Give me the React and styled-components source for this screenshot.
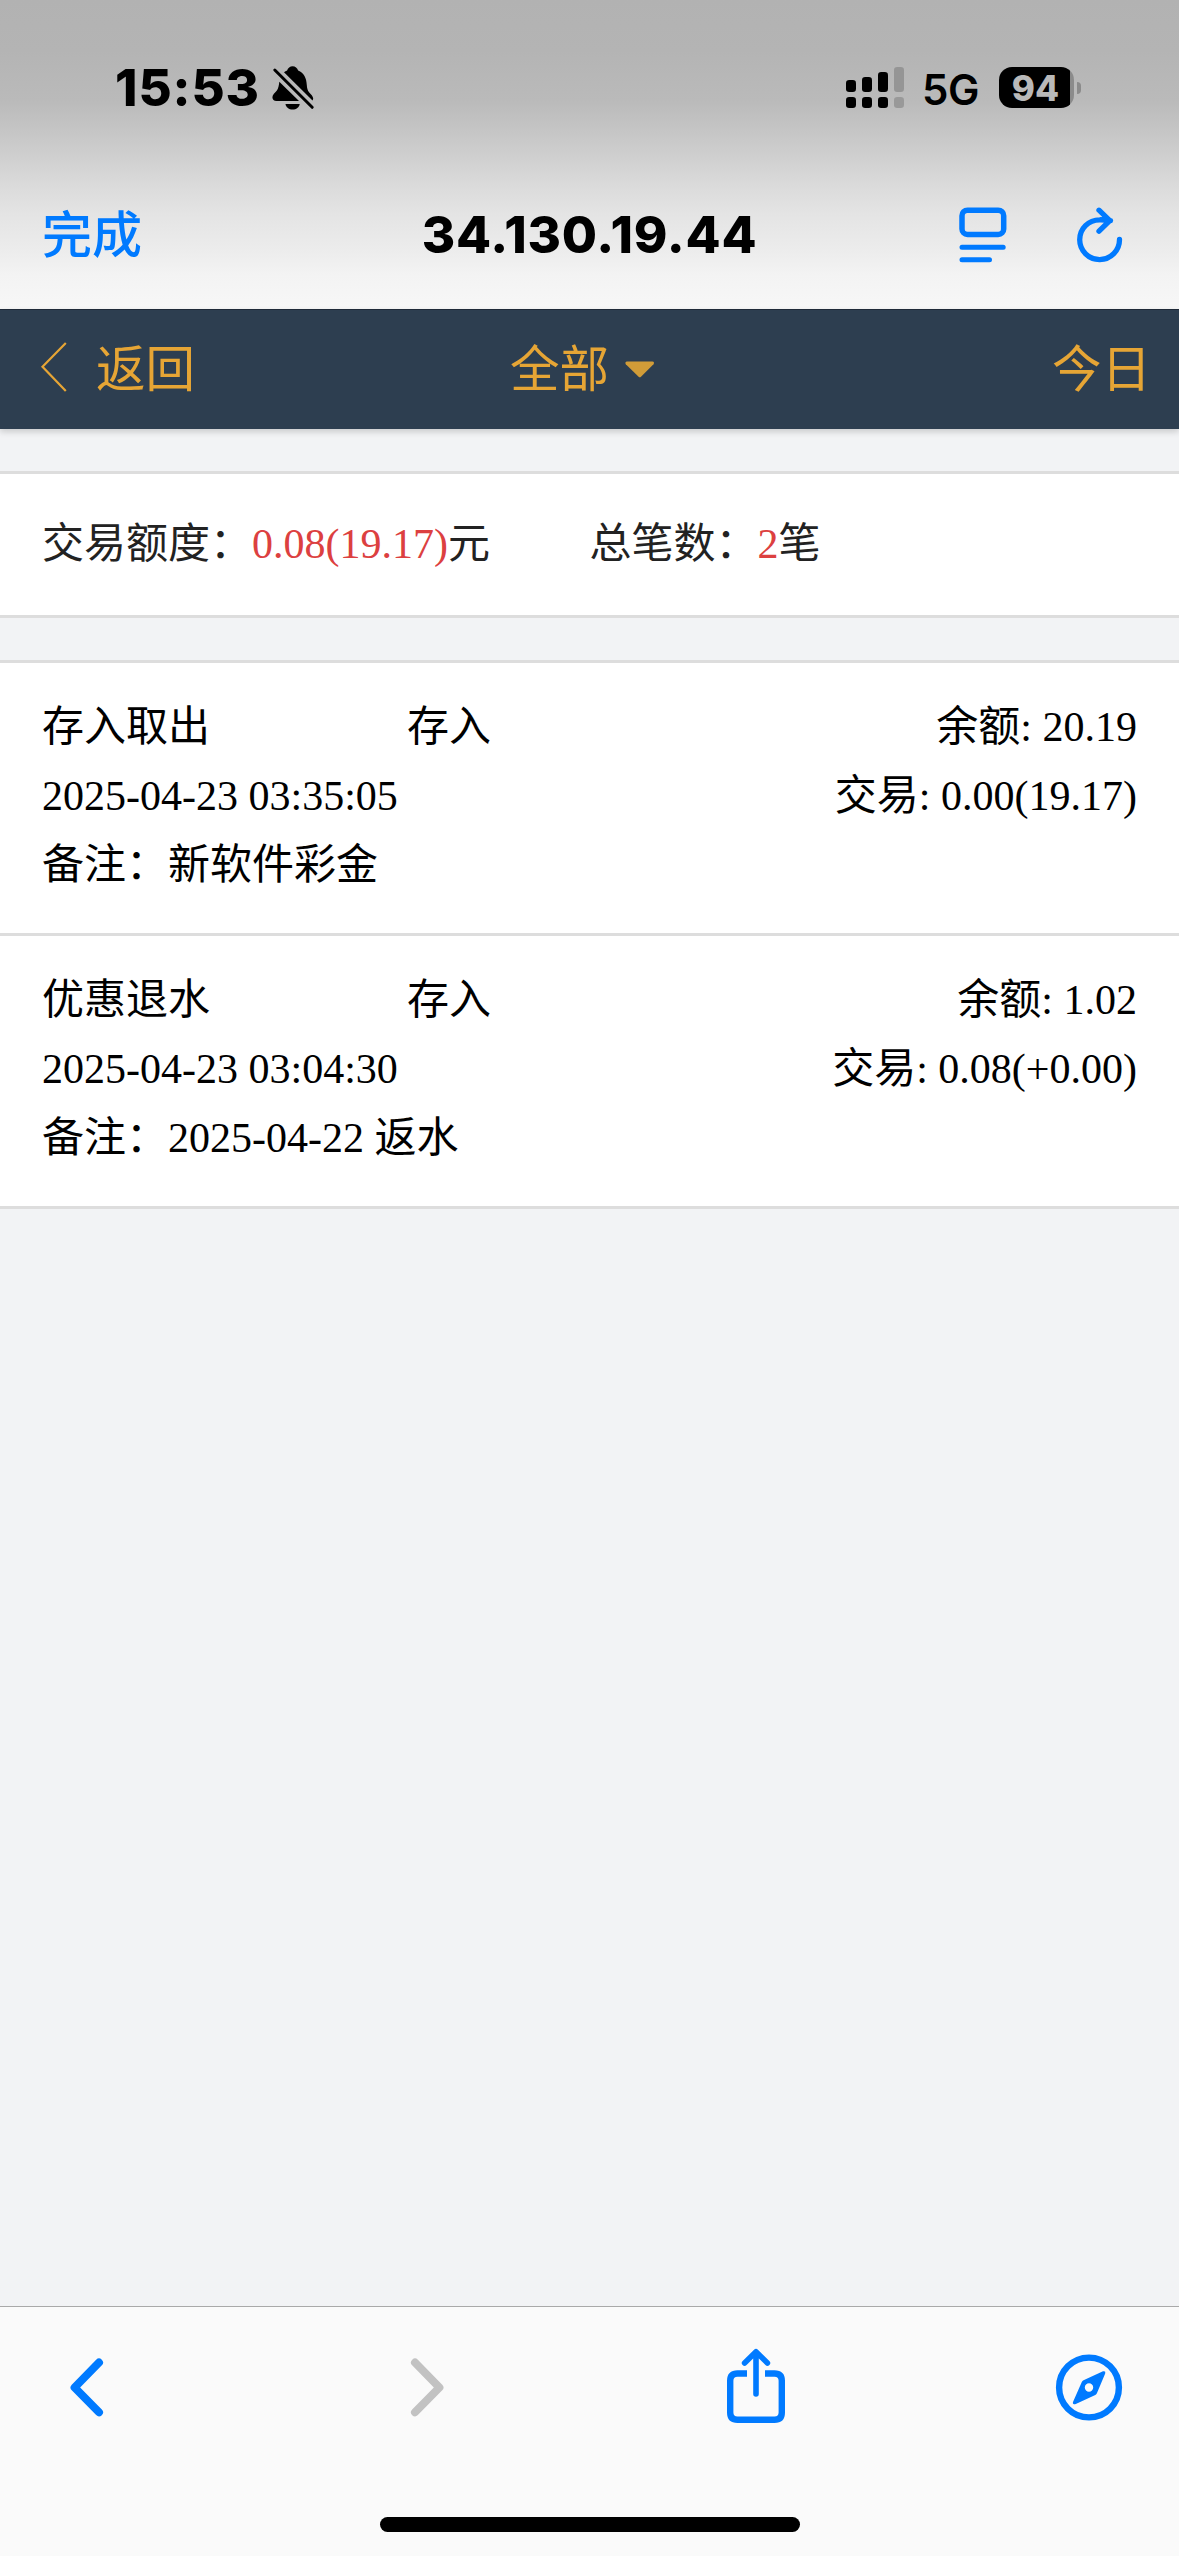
import React from "react";
import styled, { createGlobalStyle } from "styled-components";

const records = [
  {
    id: 1,
    type: "存入取出",
    action: "存入",
    balance: "20.19",
    time: "2025-04-23 03:35:05",
    amount: "0.00(19.17)",
    remark: "新软件彩金",
  },
  {
    id: 2,
    type: "优惠退水",
    action: "存入",
    balance: "1.02",
    time: "2025-04-23 03:04:30",
    amount: "0.08(+0.00)",
    remark: "2025-04-22 返水",
  },
];

function StatusBar() {
  return (
    <Status>
      <Clock>
        <span>15:53</span>
        <svg width="44" height="44" viewBox="0 0 44 44">
          <path d="M12 6.2c1-.8 2-1.300 3.100-1.700C15.900 1.900 18 .3 20.600.3s4.700 1.600 5.500 4.200c5.900 2.200 8.300 7.500 8.700 14.500.2 3.200.7 5.200 2.200 7.200 2.300 2.400 4.200 4.400 4.200 6.400 0 .8-.3 1.300-.7 1.800z" />
          <path d="M7.300 15.800 27 35H4.500C2 35 .4 33.600.4 31.300c0-2.600 2.600-4.300 4.300-6.500 1.700-2.200 2.200-5.200 2.600-9z" />
          <path d="M13.500 38h14.200c-.4 3.300-3.500 5.600-7.100 5.600s-6.700-2.300-7.100-5.600z" />
          <path d="M2.800 4 40.200 41.300" fill="none" stroke="#000" strokeWidth="3" strokeLinecap="round" />
        </svg>
      </Clock>
      <Indicators>
        <svg width="58" height="41" viewBox="0 0 58 41">
          <rect x="0" y="13" width="10" height="12" rx="3.200" />
          <rect x="16" y="10" width="10" height="15" rx="3.200" />
          <rect x="32" y="5" width="10" height="20" rx="3.200" />
          <rect x="48" y="0" width="10" height="25" rx="3.200" fill="#959595" />
          <rect x="0" y="30" width="10" height="11" rx="3.200" />
          <rect x="16" y="30" width="10" height="11" rx="3.200" />
          <rect x="32" y="30" width="10" height="11" rx="3.200" />
          <rect x="48" y="30" width="10" height="11" rx="3.200" fill="#999" />
        </svg>
        <Network>5G</Network>
        <Battery>
          <BatteryBody>94</BatteryBody>
          <BatteryCap />
        </Battery>
      </Indicators>
    </Status>
  );
}

function BrowserBar() {
  return (
    <Browser>
      <Done>完成</Done>
      <Address>34.130.19.44</Address>
      <BrowserActions>
        <svg width="48" height="56" viewBox="0 0 48 56" fill="none" stroke="#007aff" strokeWidth="5.500" strokeLinecap="round">
          <rect x="3" y="3.200" width="41.700" height="24.200" rx="5.500" />
          <path d="M3 40.200h41.200M3 52.700h27.500" strokeWidth="5" />
        </svg>
        <svg width="46" height="56" viewBox="0 0 46 56" fill="none" stroke="#007aff" strokeWidth="5.300" strokeLinecap="round" strokeLinejoin="round">
          <path d="M42.500 32.500A19.900 19.900 0 1 1 22.600 12.800C26 12.600 29 13 33.500 13.600M22 3.200 32.800 13.600 22 24.200" />
        </svg>
      </BrowserActions>
    </Browser>
  );
}

export default function App() {
  return (
    <Page>
      <GlobalStyle />
      <TopChrome>
        <StatusBar />
        <BrowserBar />
      </TopChrome>

      <NavBar>
        <BackLink>
          <svg width="26" height="50" viewBox="0 0 26 50" fill="none" stroke="#e6a535" strokeWidth="2.200">
            <path d="M24.800 1 1.500 24.800 24.800 49" />
          </svg>
          <Label>返回</Label>
        </BackLink>
        <Filter>
          <Label>全部</Label>
          <Caret width="30" height="17" viewBox="0 0 30 17">
            <path d="M2 .5h25.500c1.500 0 2 1.500 1 2.700L16 15.800q-1.200 1-2.400 0L.8 3.200C-.2 2 .5.500 2 .500z" fill="#d19c38" />
          </Caret>
        </Filter>
        <Today>今日</Today>
      </NavBar>

      <Content>
        <Summary>
          <div>
            交易额度：<Red>0.08(19.17)</Red>元
          </div>
          <div>
            总笔数：<Red>2</Red>笔
          </div>
        </Summary>

        <RecordList>
          {records.map((record) => (
            <Record key={record.id}>
              <Columns>
                <span>{record.type}</span>
                <span>{record.action}</span>
                <Right>余额: {record.balance}</Right>
              </Columns>
              <Line>
                <span>{record.time}</span>
                <Right>交易: {record.amount}</Right>
              </Line>
              <Line>备注：{record.remark}</Line>
            </Record>
          ))}
        </RecordList>
      </Content>

      <BottomBar>
        <Toolbar>
          <svg width="34" height="72" viewBox="0 0 34 72" fill="none" stroke="#007aff" strokeWidth="8" strokeLinecap="round" strokeLinejoin="round">
            <path d="M29 11.500 4.600 36.500 29 61.300" />
          </svg>
          <svg width="34" height="72" viewBox="0 0 34 72" fill="none" stroke="#c2c2c2" strokeWidth="8" strokeLinecap="round" strokeLinejoin="round">
            <path d="M5 11.500 29.400 36.500 5 61.300" />
          </svg>
          <svg width="58" height="74" viewBox="0 0 58 74" fill="none" stroke="#007aff" strokeLinejoin="round">
            <path d="M20 22.500h-9.500q-7.300 0-7.300 7.300v31.700q0 7.300 7.300 7.300h37q7.300 0 7.300-7.300V29.800q0-7.300-7.300-7.300H38" strokeWidth="6.400" />
            <path d="M29 2v41M17.600 12 29 .8l11.400 11.200" strokeWidth="5.600" strokeLinecap="round" />
          </svg>
          <svg width="66" height="72" viewBox="0 0 66 72">
            <circle cx="33" cy="36.500" r="29.900" fill="none" stroke="#007aff" strokeWidth="6.400" />
            <path
              d="M27.500 29.300 47 20.300q3-.8 2.200 2.200l-8.300 19.800q-.5 1.100-1.600 1.700L19.800 53q-3.800 1-2.700-2.200l8.700-19.700q.5-1.200 1.700-1.800zM33 32.300a4.200 4.200 0 1 0 0 8.400 4.200 4.200 0 0 0 0-8.400z"
              fill="#007aff"
              fillRule="evenodd"
            />
          </svg>
        </Toolbar>
        <HomeIndicator />
      </BottomBar>
    </Page>
  );
}

const GlobalStyle = createGlobalStyle`
  * {
    box-sizing: border-box;
  }

  body {
    margin: 0;
    background: #f2f3f5;
  }

  svg {
    display: block;
    flex-shrink: 0;
    overflow: visible;
  }
`;

const Page = styled.div`
  display: flex;
  flex-direction: column;
  width: 1179px;
  height: 2556px;
  overflow: hidden;
  background: #f2f3f5;
  color: #000;
  font-family: "Liberation Serif", "Noto Sans CJK SC", serif;
  font-size: 42px;
`;

const TopChrome = styled.header`
  height: 309px;
  flex-shrink: 0;
  font-family: Inter, "Noto Sans CJK SC", sans-serif;
  background: linear-gradient(
    #b2b2b2 0,
    #b4b4b4 50px,
    #bababa 100px,
    #c5c5c5 130px,
    #cfcfcf 156px,
    #dadada 184px,
    #e4e4e4 214px,
    #ececec 250px,
    #f3f3f3 275px,
    #f7f7f7 309px
  );
`;

const Status = styled.div`
  display: flex;
  justify-content: space-between;
  align-items: center;
  height: 175px;
  padding: 0 98px 0 115px;
`;

const Clock = styled.div`
  display: flex;
  align-items: center;
  gap: 12px;
  font-size: 51px;
  font-weight: 800;
  line-height: 60px;
  letter-spacing: 0.9px;
`;

const Indicators = styled.div`
  display: flex;
  align-items: center;
`;

const Network = styled.span`
  width: 57px;
  margin: 4px 20px 0 18px;
  font-size: 42px;
  font-weight: 600;
  line-height: 50px;
  letter-spacing: -0.5px;
`;

const Battery = styled.div`
  display: flex;
  align-items: center;
  gap: 3px;
`;

const BatteryBody = styled.div`
  width: 75px;
  height: 41px;
  padding-right: 2px;
  border-radius: 13px;
  background: linear-gradient(90deg, #000 71px, #8b8b8b 71px);
  color: #b9b9b9;
  font-size: 35px;
  font-weight: 800;
  line-height: 42px;
  text-align: center;
`;

const BatteryCap = styled.div`
  width: 4px;
  height: 12px;
  border-radius: 0 4px 4px 0;
  background: #8b8b8b;
`;

const Browser = styled.div`
  display: grid;
  grid-template-columns: 1fr auto 1fr;
  align-items: center;
  height: 120px;
  padding: 0 42px;
`;

const Done = styled.span`
  color: #007aff;
  font-size: 50px;
  font-weight: 500;
  line-height: 60px;
`;

const Address = styled.span`
  font-size: 51px;
  font-weight: 800;
  line-height: 58px;
  letter-spacing: 0.8px;
`;

const BrowserActions = styled.div`
  display: flex;
  justify-content: flex-end;
  gap: 70px;
  padding-right: 14px;
`;

const NavBar = styled.nav`
  display: grid;
  grid-template-columns: 1fr auto 1fr;
  align-items: center;
  height: 120px;
  flex-shrink: 0;
  padding: 0 27px 6px 41px;
  border-top: 1px solid #1f2a38;
  background: #2d3e50;
  box-shadow: 0 3px 6px rgba(0, 0, 0, 0.16);
  color: #e6a535;
  font-family: "Noto Sans CJK SC", sans-serif;
  font-size: 49.5px;
  line-height: 60px;
`;

const BackLink = styled.div`
  display: flex;
  align-items: center;
  gap: 29px;
`;

const Filter = styled.div`
  display: flex;
  align-items: center;
  gap: 16px;
  margin-right: 28px;
`;

const Label = styled.span`
  padding-bottom: 2px;
`;

const Caret = styled.svg`
  margin-top: 5px;
`;

const Today = styled.div`
  padding: 0 1px 2px 0;
  text-align: right;
`;

const Content = styled.main`
  flex: 1;
  padding-top: 42px;
`;

const Summary = styled.section`
  display: grid;
  grid-template-columns: 1fr 1fr;
  align-items: center;
  height: 147px;
  padding: 0 42px 1px;
  border: solid #ddd;
  border-width: 3px 0;
  background: #fff;
  color: #222;
  line-height: 69px;
  white-space: nowrap;
`;

const Red = styled.span`
  color: #dc4040;
`;

const RecordList = styled.section`
  margin-top: 42px;
  border-top: 3px solid #ddd;
  background: #fff;
`;

const Record = styled.article`
  height: 273px;
  padding: 30px 42px 0;
  border-bottom: 3px solid #ddd;
  line-height: 69px;
  white-space: nowrap;
`;

const Columns = styled.div`
  display: grid;
  grid-template-columns: repeat(3, 1fr);
  height: 69px;
`;

const Line = styled.div`
  display: flex;
  justify-content: space-between;
  height: 69px;
`;

const Right = styled.span`
  text-align: right;
`;

const BottomBar = styled.footer`
  display: flex;
  flex-direction: column;
  align-items: center;
  justify-content: space-between;
  height: 250px;
  flex-shrink: 0;
  padding-bottom: 24px;
  border-top: 1px solid #a9a9a9;
  background: #fafafa;
`;

const Toolbar = styled.div`
  display: grid;
  grid-template-columns: 340px 317px 329px auto;
  width: 100%;
  padding: 44px 57px 0 70px;
`;

const HomeIndicator = styled.div`
  width: 420px;
  height: 15px;
  border-radius: 8px;
  background: #000;
`;
